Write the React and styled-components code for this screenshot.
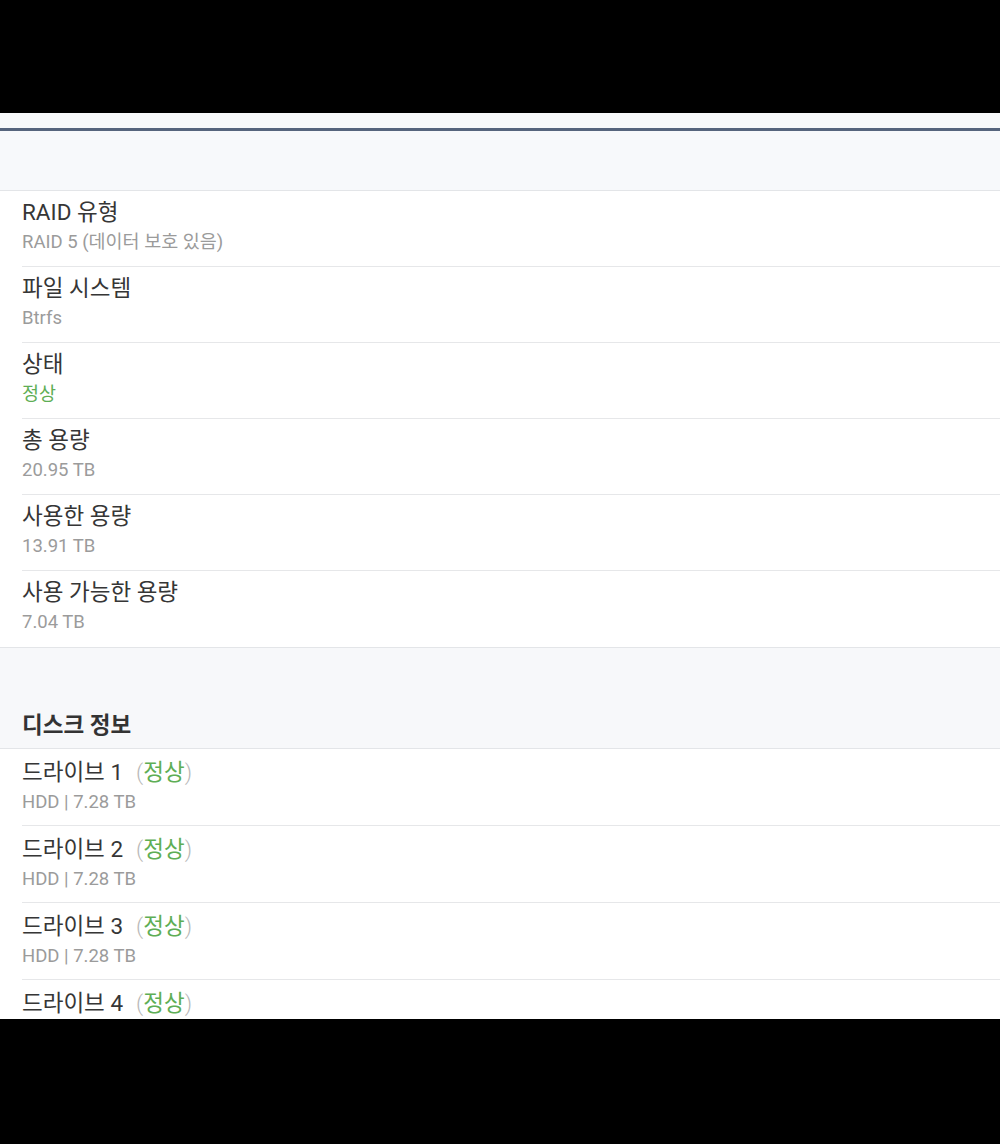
import * as React from 'react'
import styled, { createGlobalStyle } from 'styled-components'

const GlobalStyle = createGlobalStyle`
  html, body {
    margin: 0;
    padding: 0;
    background: #000;
  }
  body {
    font-family: Roboto, "Noto Sans CJK KR", sans-serif;
  }
`

const volumeInfo = [
  { label: 'RAID 유형', value: 'RAID 5 (데이터 보호 있음)' },
  { label: '파일 시스템', value: 'Btrfs' },
  { label: '상태', value: '정상', ok: true },
  { label: '총 용량', value: '20.95 TB' },
  { label: '사용한 용량', value: '13.91 TB' },
  { label: '사용 가능한 용량', value: '7.04 TB' },
]

const drives = [1, 2, 3, 4].map((n) => ({
  name: `드라이브 ${n}`,
  status: '정상',
  detail: 'HDD | 7.28 TB',
}))

export default function App() {
  return (
    <>
      <GlobalStyle />
      <Letterbox top />
      <Screen>
        <StatusStrip />
        <AccentLine />
        <TopBand />
        <Group>
          {volumeInfo.map((item) => (
            <Row key={item.label}>
              <RowInner>
                <Label>{item.label}</Label>
                <Value ok={item.ok}>{item.value}</Value>
              </RowInner>
            </Row>
          ))}
        </Group>
        <SectionHeader>디스크 정보</SectionHeader>
        <Group>
          {drives.map((d) => (
            <Row key={d.name}>
              <RowInner tall>
                <Label>
                  {d.name}
                  <Status>
                    <Paren>(</Paren>
                    {d.status}
                    <Paren>)</Paren>
                  </Status>
                </Label>
                <Value>{d.detail}</Value>
              </RowInner>
            </Row>
          ))}
        </Group>
      </Screen>
      <Letterbox />
    </>
  )
}

const Letterbox = styled.div`
  height: ${(p) => (p.top ? '113px' : '125px')};
  background: #000;
`

const Screen = styled.div`
  height: 906px;
  overflow: hidden;
  background: #fff;
  display: flex;
  flex-direction: column;
`

const StatusStrip = styled.div`
  height: 15px;
  flex: none;
  background: #f8fafb;
`

const AccentLine = styled.div`
  height: 3px;
  flex: none;
  background: #56657d;
  box-shadow: 0 1px 0 #c9d6e6;
`

const TopBand = styled.div`
  height: 59px;
  flex: none;
  background: #f7f9fb;
  border-bottom: 1px solid #e3e5e8;
`

const Group = styled.div`
  background: #fff;
  border-bottom: 1px solid #e3e5e8;
  flex: none;
`

const Row = styled.div`
  padding-left: 22px;

  &:last-child > div {
    border-bottom: none;
  }
`

const RowInner = styled.div`
  height: ${(p) => (p.tall ? '77px' : '76px')};
  box-sizing: border-box;
  padding-top: ${(p) => (p.tall ? '9px' : '7px')};
  border-bottom: 1px solid #e6e7e9;
  display: flex;
  flex-direction: column;
`

const Label = styled.div`
  font-size: 22.5px;
  line-height: 29px;
  color: #363636;
  display: flex;
  align-items: baseline;
`

const Value = styled.div`
  font-size: 18.5px;
  line-height: 24px;
  margin-top: 3px;
  color: ${(p) => (p.ok ? '#5eae55' : '#9b9b9b')};
`

const Status = styled.span`
  margin-left: 13px;
  color: #5eae55;
`

const Paren = styled.span`
  color: #b9b9b9;
  font-weight: 300;
`

const SectionHeader = styled.div`
  height: 101px;
  flex: none;
  box-sizing: border-box;
  background: #f7f8fa;
  border-bottom: 1px solid #e3e5e8;
  padding: 0 22px 8px;
  display: flex;
  align-items: flex-end;
  font-size: 22.5px;
  font-weight: 700;
  line-height: 30px;
  color: #333;
`
